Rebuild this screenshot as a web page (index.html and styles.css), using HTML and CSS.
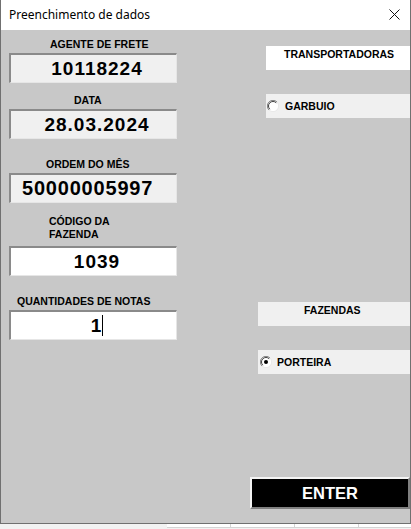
FILE: index.html
```html
<!DOCTYPE html>
<html>
<head>
<meta charset="utf-8">
<title>Preenchimento de dados</title>
<link rel="stylesheet" href="styles.css">
</head>
<body>
<div class="window">
  <div class="titlebar">
    <span class="title">Preenchimento de dados</span>
    <svg class="close" width="11" height="11" viewBox="0 0 11 11"><path d="M0.5 0.5 L10.5 10.5 M10.5 0.5 L0.5 10.5" stroke="#111" stroke-width="1" fill="none"/></svg>
  </div>
  <div class="client">
    <div class="columns">
      <div class="left">
        <div class="label l-agente">AGENTE DE FRETE</div>
        <div class="field grey">10118224</div>
        <div class="label l-data">DATA</div>
        <div class="field grey">28.03.2024</div>
        <div class="label l-ordem">ORDEM DO MÊS</div>
        <div class="field grey big">50000005997</div>
        <div class="label l-codigo">CÓDIGO DA<br>FAZENDA</div>
        <div class="field white">1039</div>
        <div class="label l-quant">QUANTIDADES DE NOTAS</div>
        <div class="field white">1<span class="caret"></span></div>
      </div>
      <div class="right">
        <div class="box transp">TRANSPORTADORAS</div>
        <div class="option garbuio">
          <svg class="radio" width="12" height="12" viewBox="0 0 12 12">
            <circle cx="6" cy="6" r="5.5" fill="#fff"/>
            <path d="M10 2 A5.5 5.5 0 0 0 2 10" stroke="#808080" stroke-width="1" fill="none"/>
            <path d="M9.2 2.8 A4.5 4.5 0 0 0 2.8 9.2" stroke="#404040" stroke-width="1" fill="none"/>
            <path d="M2 10 A5.5 5.5 0 0 0 10 2" stroke="#e8e8e8" stroke-width="1" fill="none"/>
          </svg>
          <span>GARBUIO</span>
        </div>
        <div class="box fazendas">FAZENDAS</div>
        <div class="option porteira">
          <svg class="radio" width="12" height="12" viewBox="0 0 12 12">
            <circle cx="6" cy="6" r="5.5" fill="#fff"/>
            <path d="M10 2 A5.5 5.5 0 0 0 2 10" stroke="#808080" stroke-width="1" fill="none"/>
            <path d="M9.2 2.8 A4.5 4.5 0 0 0 2.8 9.2" stroke="#404040" stroke-width="1" fill="none"/>
            <path d="M2 10 A5.5 5.5 0 0 0 10 2" stroke="#e8e8e8" stroke-width="1" fill="none"/>
            <circle cx="6" cy="6" r="2" fill="#000"/>
          </svg>
          <span>PORTEIRA</span>
        </div>
      </div>
    </div>
    <div class="btn-row">
      <div class="enter">ENTER</div>
    </div>
  </div>
</div>
<div class="sheet">
  <div class="rowhead"></div>
  <div class="cell"></div>
  <div class="cell"></div>
  <div class="cell"></div>
  <div class="cell last"></div>
</div>
</body>
</html>
```

FILE: styles.css
```css
html, body {
  margin: 0;
  padding: 0;
}
body {
  width: 411px;
  height: 529px;
  overflow: hidden;
  background: #f2f2f2;
  font-family: "Liberation Sans", Arial, sans-serif;
}
.window {
  width: 411px;
  height: 524px;
  box-sizing: border-box;
  border: 1px solid #707070;
  border-top: none;
  display: flex;
  flex-direction: column;
}
.titlebar {
  height: 29px;
  flex: none;
  background: #fff;
  display: flex;
  align-items: center;
  justify-content: space-between;
  padding: 0 10px 1px 8px;
}
.title {
  font-family: "Noto Sans", "Open Sans", sans-serif;
  font-size: 12px;
  color: #000;
}
.close {
  display: block;
  margin-bottom: 1px;
}
.client {
  flex: 1;
  background: #c8c8c8;
  display: flex;
  flex-direction: column;
}
.columns {
  display: flex;
}
.left {
  width: 168px;
  margin-left: 8px;
  padding-top: 8px;
  display: flex;
  flex-direction: column;
}
.label {
  font-size: 10.5px;
  font-weight: bold;
  line-height: 13px;
  color: #000;
  white-space: nowrap;
}
.l-agente { padding-left: 41px; }
.l-data { padding-left: 65px; margin-top: 11px; }
.l-ordem { padding-left: 37px; margin-top: 19px; }
.l-codigo { padding-left: 40px; margin-top: 12px; margin-bottom: 3px; }
.l-quant { padding-left: 8px; margin-top: 19px; }
.field {
  height: 30px;
  box-sizing: border-box;
  border-style: solid;
  border-width: 2px 1px 1px 2px;
  border-color: #8a8a8a #e6e6e6 #e6e6e6 #8a8a8a;
  font-size: 19px;
  font-weight: bold;
  letter-spacing: 1px;
  line-height: 27px;
  text-align: center;
  padding-left: 7px;
  color: #000;
  margin-top: 2px;
}
.grey { background: #f0f0f0; }
.white { background: #fff; }
.big {
  font-size: 20px;
  letter-spacing: 0.8px;
  text-align: left;
  padding-left: 11px;
}
.caret {
  display: inline-block;
  width: 1px;
  height: 21px;
  background: #000;
  vertical-align: -4px;
  margin-left: 0;
}
.right {
  flex: 1;
  margin-left: 81px;
  display: flex;
  flex-direction: column;
}
.box {
  height: 24px;
  box-sizing: border-box;
  font-size: 10.5px;
  font-weight: bold;
  line-height: 13px;
  color: #000;
}
.transp {
  background: #fff;
  margin-left: 8px;
  margin-top: 16px;
  padding: 2px 0 0 18px;
}
.fazendas {
  background: #f0f0f0;
  margin-top: 184px;
  padding: 2px 0 0 46px;
}
.option {
  height: 24px;
  background: #f0f0f0;
  display: flex;
  align-items: center;
  font-size: 10.5px;
  font-weight: bold;
  color: #000;
}
.garbuio {
  margin-left: 8px;
  margin-top: 24px;
}
.porteira {
  margin-top: 24px;
}
.radio {
  display: block;
  flex: none;
}
.garbuio .radio { margin-left: 1px; margin-right: 6px; }
.porteira .radio { margin-left: 2px; margin-right: 5px; }
.btn-row {
  margin-top: auto;
  display: flex;
  justify-content: flex-end;
  padding-bottom: 14px;
}
.enter {
  width: 160px;
  height: 32px;
  box-sizing: border-box;
  background: #000;
  border-style: solid;
  border-width: 2px;
  border-color: #f4f4f4 #808080 #808080 #f4f4f4;
  color: #fff;
  font-size: 16.5px;
  font-weight: bold;
  text-align: center;
  line-height: 28px;
}
.sheet {
  height: 5px;
  display: flex;
}
.rowhead {
  width: 167px;
  background: #f2f2f2;
}
.cell {
  width: 63px;
  background: #fff;
  border-right: 1px solid #d4d4d4;
  border-bottom: 1px solid #d4d4d4;
  height: 3px;
  margin-top: 0;
}
.cell.last {
  flex: 1;
  border-right: none;
}
```
